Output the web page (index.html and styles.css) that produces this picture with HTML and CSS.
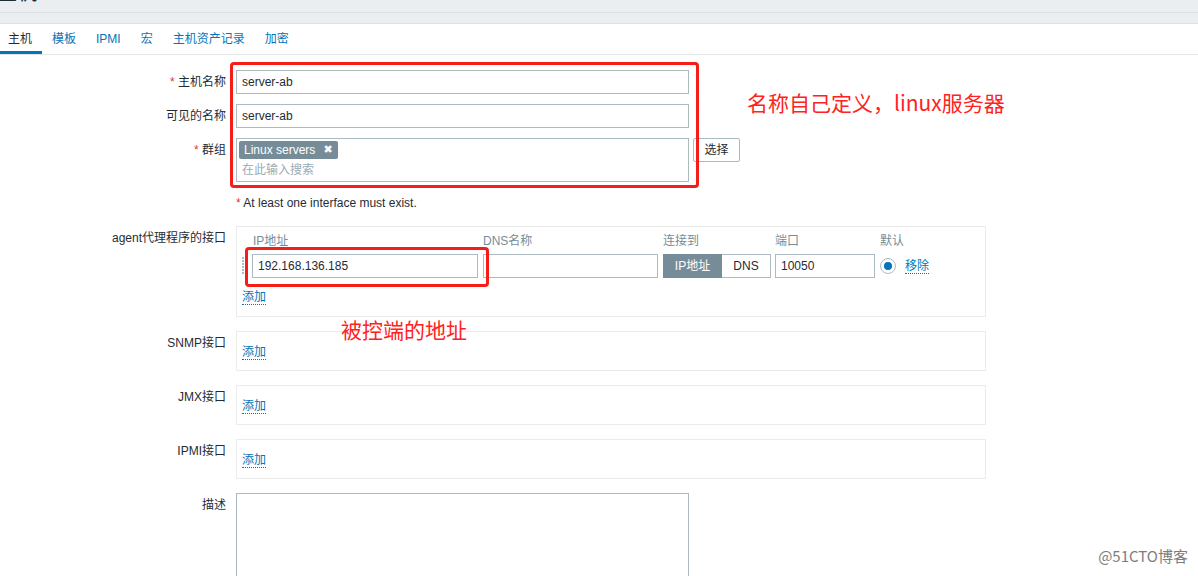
FILE: index.html
```html
<!DOCTYPE html>
<html lang="zh">
<head>
<meta charset="utf-8">
<title>主机</title>
<link rel="stylesheet" href="styles.css">
</head>
<body>
<div class="page">
  <header class="top">
    <div class="title-band"><h1 class="title">主机</h1></div>
    <div class="sub-band"></div>
  </header>

  <nav class="tabs">
    <a class="tab active">主机</a>
    <a class="tab">模板</a>
    <a class="tab">IPMI</a>
    <a class="tab">宏</a>
    <a class="tab">主机资产记录</a>
    <a class="tab">加密</a>
  </nav>

  <div class="form">
    <div class="row">
      <div class="lbl"><span class="req">*</span> 主机名称</div>
      <div class="field"><div class="inp">server-ab</div></div>
    </div>
    <div class="row">
      <div class="lbl">可见的名称</div>
      <div class="field"><div class="inp">server-ab</div></div>
    </div>
    <div class="row">
      <div class="lbl"><span class="req">*</span> 群组</div>
      <div class="field field-inline">
        <div class="ms">
          <span class="chip">Linux servers <b class="chip-x">✖</b></span>
          <div class="ms-ph">在此输入搜索</div>
        </div>
        <div class="btn">选择</div>
      </div>
    </div>
    <div class="row row-note">
      <div class="lbl"></div>
      <div class="field note"><span class="req">*</span> At least one interface must exist.</div>
    </div>

    <div class="row row-if">
      <div class="lbl">agent代理程序的接口</div>
      <div class="field">
        <div class="ifbox">
          <div class="ifgrid">
            <div></div>
            <div class="hd hd-ip">IP地址</div>
            <div class="hd">DNS名称</div>
            <div class="hd">连接到</div>
            <div class="hd">端口</div>
            <div class="hd">默认</div>

            <div class="handle-cell"><span class="handle"></span></div>
            <div><div class="inp inp-ip">192.168.136.185</div></div>
            <div><div class="inp inp-dns"></div></div>
            <div>
              <div class="toggle">
                <span class="tg tg-on">IP地址</span><span class="tg tg-off">DNS</span>
              </div>
            </div>
            <div><div class="inp inp-port">10050</div></div>
            <div class="def-cell"><span class="radio"><span class="radio-dot"></span></span><a class="link">移除</a></div>
          </div>
          <div class="add-row"><a class="link">添加</a></div>
        </div>
      </div>
    </div>

    <div class="row row-if">
      <div class="lbl">SNMP接口</div>
      <div class="field"><div class="ifbox ifbox-empty"><a class="link">添加</a></div></div>
    </div>
    <div class="row row-if">
      <div class="lbl">JMX接口</div>
      <div class="field"><div class="ifbox ifbox-empty"><a class="link">添加</a></div></div>
    </div>
    <div class="row row-if">
      <div class="lbl">IPMI接口</div>
      <div class="field"><div class="ifbox ifbox-empty"><a class="link">添加</a></div></div>
    </div>
    <div class="row">
      <div class="lbl">描述</div>
      <div class="field"><div class="textarea"></div></div>
    </div>
  </div>

  <div class="mark mark-1"></div>
  <div class="note-red note-red-1">名称自己定义，linux服务器</div>
  <div class="mark mark-2"></div>
  <div class="note-red note-red-2">被控端的地址</div>
  <div class="watermark">@51CTO博客</div>
</div>
</body>
</html>
```

FILE: styles.css
```css
* { box-sizing: border-box; }

body {
  margin: 0;
  font-family: "Liberation Sans", Arial, "Noto Sans CJK SC", sans-serif;
  font-size: 12px;
  color: #1f2c33;
  background: #fff;
}

.page {
  position: relative;
  width: 1198px;
  height: 576px;
  overflow: hidden;
}

/* header */
.top { background: #ebeef0; }
.title-band {
  height: 13px;
  border-bottom: 1px solid #dde2e5;
  overflow: hidden;
}
.title {
  margin: -19px 0 0 -3px;
  font-size: 20px;
  line-height: 24px;
  font-weight: normal;
  color: #1f2c33;
}
.sub-band {
  height: 11px;
  border-bottom: 1px solid #dde2e5;
}

/* tabs */
.tabs {
  display: flex;
  height: 31px;
  margin-left: -2px;
  padding-left: 2px;
  border-bottom: 1px solid #e2e6e8;
}
.tab {
  display: block;
  height: 30px;
  padding: 2px 10px 0 10px;
  line-height: 26px;
  border-bottom: 3px solid transparent;
  color: #0275b8;
  cursor: pointer;
}
.tab.active {
  color: #1f2c33;
  border-bottom-color: #0275b8;
  margin-left: -2px;
}

/* form */
.form { padding-top: 15px; }
.row {
  display: flex;
  align-items: flex-start;
  margin-bottom: 10px;
}
.lbl {
  width: 236px;
  flex: none;
  padding-right: 10px;
  padding-top: 4px;
  line-height: 16px;
  text-align: right;
}
.req { color: #e33734; }
.field { flex: none; }
.field-inline { display: flex; align-items: flex-start; }

.inp {
  width: 453px;
  height: 24px;
  border: 1px solid #acbbc2;
  padding: 0 5px;
  line-height: 22px;
  background: #fff;
  color: #1f2c33;
  white-space: nowrap;
}

.ms {
  width: 453px;
  height: 44px;
  border: 1px solid #acbbc2;
  padding: 2px;
}
.chip {
  display: inline-flex;
  align-items: center;
  height: 18px;
  padding: 0 5px 0 5px;
  background: #768d99;
  color: #fff;
  border-radius: 2px;
  line-height: 18px;
  gap: 8px;
}
.chip-x {
  font-size: 11px;
  font-weight: bold;
  font-family: "DejaVu Sans", sans-serif;
}
.ms-ph {
  margin-top: 3px;
  padding-left: 3px;
  line-height: 16px;
  color: #9aabb5;
}
.btn {
  margin-left: 4px;
  width: 47px;
  height: 24px;
  border: 1px solid #acbbc2;
  border-radius: 2px;
  line-height: 22px;
  text-align: center;
  background: #fff;
}

.row-note { margin-bottom: 15px; }
.note {
  padding-top: 3px;
  line-height: 16px;
}

/* interfaces */
.row-if { margin-bottom: 14px; }
.ifbox {
  width: 750px;
  border: 1px solid #ebebeb;
  padding: 7px 0 11px 0;
}
.ifgrid {
  display: grid;
  grid-template-columns: 15px 231px 180px 112px 105px 1fr;
  row-gap: 6px;
  align-items: center;
}
.hd {
  line-height: 14px;
  color: #768d99;
}
.hd-ip { padding-left: 1px; }
.handle-cell { display: flex; padding-left: 5px; }
.handle {
  display: block;
  width: 2px;
  height: 18px;
  background: repeating-linear-gradient(to bottom, #acbbc2 0 2px, transparent 2px 3px);
}
.inp-ip { width: 226px; }
.inp-dns { width: 175px; }
.inp-port { width: 100px; }
.toggle {
  display: flex;
  width: 108px;
  height: 24px;
}
.tg {
  display: block;
  height: 24px;
  line-height: 22px;
  text-align: center;
  border: 1px solid #acbbc2;
}
.tg-on {
  width: 59px;
  background: #768d99;
  border-color: #768d99;
  color: #fff;
}
.tg-off {
  width: 49px;
  border-left: none;
  color: #1f2c33;
}
.def-cell {
  display: flex;
  align-items: center;
  gap: 9px;
}
.radio {
  display: flex;
  align-items: center;
  justify-content: center;
  width: 16px;
  height: 16px;
  border: 1px solid #acbbc2;
  border-radius: 50%;
}
.radio-dot {
  width: 8px;
  height: 8px;
  border-radius: 50%;
  background: #0275b8;
}
.link {
  color: #0275b8;
  line-height: 14px;
  border-bottom: 1px dotted #0275b8;
  cursor: pointer;
}
.add-row {
  margin-top: 11px;
  padding-left: 5px;
  line-height: 16px;
}
.ifbox-empty {
  padding: 12px 5px 10px 5px;
  line-height: 16px;
}

.textarea {
  width: 453px;
  height: 110px;
  border: 1px solid #acbbc2;
}

/* annotations overlaid on the screenshot */
.mark {
  position: absolute;
  border: 3px solid #f51d18;
  border-radius: 4px;
}
.mark-1 { left: 230px; top: 62px; width: 469px; height: 126px; }
.mark-2 { left: 245px; top: 247px; width: 244px; height: 40px; }
.note-red {
  position: absolute;
  color: #ff2222;
  font-family: "Noto Sans CJK SC", sans-serif;
  font-size: 21px;
  line-height: 24px;
  white-space: nowrap;
}
.note-red-1 { left: 747px; top: 90px; }
.note-red-2 { left: 341px; top: 317px; }

.watermark {
  position: absolute;
  right: 10px;
  top: 546px;
  color: #7d7d7d;
  font-family: "Noto Sans CJK SC", sans-serif;
  font-size: 15px;
  line-height: 20px;
}
```
